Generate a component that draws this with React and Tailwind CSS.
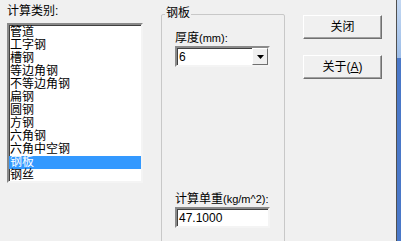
import React, { useState } from "react";

const items = [
  "管道",
  "工字钢",
  "槽钢",
  "等边角钢",
  "不等边角钢",
  "扁钢",
  "圆钢",
  "方钢",
  "六角钢",
  "六角中空钢",
  "钢板",
  "钢丝",
];

const font = { fontFamily: '"Liberation Sans", "Noto Sans CJK SC", sans-serif' };

const sunken =
  "border-2 border-t-[#8a8a8a] border-l-[#8a8a8a] border-r-[#f4f4f4] border-b-[#f4f4f4] shadow-[inset_1px_1px_0_#404040]";

const Button = ({ children }) => (
  <button className="w-[79px] h-[24px] bg-[#f0f0f0] border border-t-[#ffffff] border-l-[#ffffff] border-r-[#707070] border-b-[#707070] shadow-[inset_-1px_-1px_0_#a0a0a0] text-[12px] leading-none text-black flex items-center justify-center">
    {children}
  </button>
);

const App = () => {
  const [selected, setSelected] = useState(10);

  return (
    <div
      className="w-[401px] h-[241px] bg-[#f0f0f0] flex overflow-hidden text-black"
      style={font}
    >
      {/* left: list of types */}
      <div className="w-[161px] shrink-0 pl-[7px] pt-[4px]">
        <p className="text-[12px] leading-[14px] h-[19px]">计算类别:</p>
        <div className={`w-[136px] h-[160px] bg-white ${sunken} pt-[1px]`}>
          {items.map((name, id) => (
            <div
              key={id}
              onClick={() => setSelected(id)}
              className={
                selected === id
                  ? "h-[13px] text-[12px] leading-[13px] pl-[1px] bg-[#3399ff] text-white"
                  : "h-[13px] text-[12px] leading-[13px] pl-[1px]"
              }
            >
              {name}
            </div>
          ))}
        </div>
      </div>

      {/* group box */}
      <div className="w-[124px] shrink-0 pt-[14px]">
        <div className="relative h-[260px] border border-[#c8c8c8] rounded-[2px] px-[13px] pt-[16px]">
          <span className="absolute left-[3px] top-[-9px] bg-[#f0f0f0] px-[1px] text-[12px] leading-[14px]">
            钢板
          </span>
          <p className="text-[12px] leading-[14px] h-[15px] whitespace-nowrap">
            厚度<span className="text-[11px]">(mm):</span>
          </p>
          <div className={`w-[95px] h-[21px] bg-white ${sunken} flex items-center`}>
            <span className="flex-1 pl-[2px] text-[12px] leading-none">6</span>
            <div className="w-[16px] h-[17px] bg-[#f0f0f0] border border-t-[#ffffff] border-l-[#ffffff] border-r-[#707070] border-b-[#707070] flex items-center justify-center">
              <svg width="7" height="4" viewBox="0 0 7 4">
                <path d="M0 0H7L3.5 4Z" fill="#000" />
              </svg>
            </div>
          </div>
          <div className="h-[125px]" />
          <p className="text-[12px] leading-[14px] h-[15px] whitespace-nowrap">
            计算单重<span className="text-[11px]">(kg/m^2):</span>
          </p>
          <div className={`w-[95px] h-[21px] bg-white ${sunken} flex items-center`}>
            <span className="pl-[2px] text-[12px] leading-none">47.1000</span>
          </div>
        </div>
      </div>

      {/* buttons */}
      <div className="w-[111px] shrink-0 pl-[18px] pt-[15px] flex flex-col gap-[16px]">
        <Button>关闭</Button>
        <Button>
          关于(<span className="underline">A</span>)
        </Button>
      </div>

      {/* window edge */}
      <div className="w-[1px] shrink-0 bg-[#505050]" />
      <div className="flex-1 flex flex-col">
        <div className="h-[58px] bg-gradient-to-b from-[#c4d8f2] to-[#9cbde8]" />
        <div className="flex-1 bg-[#4a78c8]" />
      </div>
    </div>
  );
};

export default App;
